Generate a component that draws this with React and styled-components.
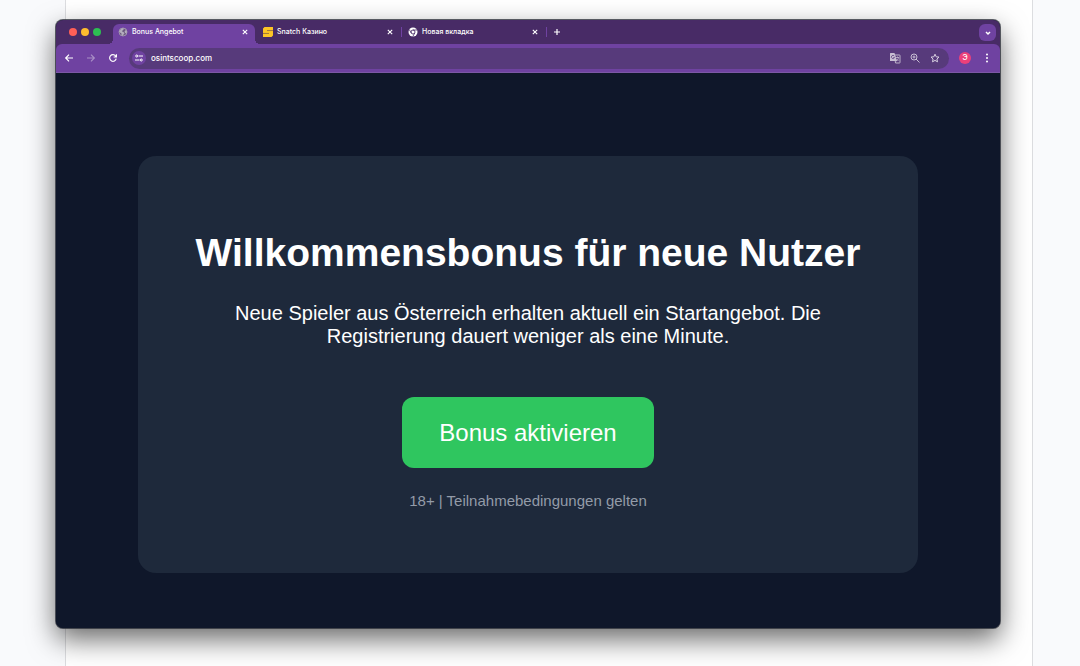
import React from 'react'
import styled, { createGlobalStyle } from 'styled-components'

const GlobalStyle = createGlobalStyle`
  * {
    box-sizing: border-box;
  }
  body {
    margin: 0;
    background: #f9fafc;
    font-family: 'Liberation Sans', Arial, sans-serif;
  }
  button {
    border: 0;
    padding: 0;
    background: none;
    color: inherit;
    font: inherit;
  }
  svg {
    display: block;
    flex: none;
  }
`

const Page = styled('div')`
  display: flex;
  min-height: 100vh;
  padding: 0 47px 0 65px;
`
const Column = styled('main')`
  flex: 1;
  min-width: 0;
  background: #fff;
  border: solid #dcdde0;
  border-width: 0 1px;
`
const Window = styled('section')`
  margin: 20px 32px 38px -10px;
  border-radius: 7px;
  overflow: hidden;
  background: #0f172a;
  box-shadow: 0 0 0 1px rgba(40, 44, 54, 0.75), 0 11px 28px rgba(0, 0, 0, 0.6);
`

const TabStrip = styled('header')`
  display: flex;
  align-items: flex-end;
  height: 24px;
  padding: 0 4px 0 13px;
  background: #482b66;
  color: #fff;
  font: 500 7px/10px Inter, sans-serif;
`
const Lights = styled('div')`
  display: flex;
  align-self: center;
  gap: 4px;
  width: 44px;
`
const Light = styled('span')`
  width: 8px;
  height: 8px;
  border-radius: 50%;
  background: ${props => props.$color};
`
const Tab = styled('div')`
  position: relative;
  display: flex;
  align-items: center;
  flex: 0 1 142px;
  gap: 4px;
  height: 20px;
  padding: 0 5px 4px;
  border-radius: 6px 6px 0 0;
  background: ${props => (props.$active ? '#6f42a1' : 'transparent')};

  &::before,
  &::after {
    content: '';
    display: ${props => (props.$active ? 'block' : 'none')};
    position: absolute;
    bottom: 0;
    width: 5px;
    height: 5px;
  }
  &::before {
    right: 100%;
    background: radial-gradient(circle at 0 0, transparent 5px, #6f42a1 5px);
  }
  &::after {
    left: 100%;
    background: radial-gradient(circle at 100% 0, transparent 5px, #6f42a1 5px);
  }
`
const TabTitle = styled('button')`
  flex: 1;
  min-width: 0;
  overflow: hidden;
  text-align: left;
  white-space: nowrap;
`
const Divider = styled('span')`
  width: 1px;
  height: 10px;
  margin: 0 1px 7px;
  background: ${props => (props.$hidden ? 'transparent' : '#6f42a1')};
`
const IconButton = styled('button')`
  display: flex;
  align-items: center;
  justify-content: center;
  width: ${props => props.$size || 10}px;
  height: ${props => props.$size || 10}px;
  color: ${props => props.$color || '#fff'};
`
const NewTab = styled(IconButton)`
  margin: 0 auto 7px 4px;
`
const TabSearch = styled(IconButton)`
  margin-bottom: 3px;
  border-radius: 6px;
  background: #6f42a1;
`

const ToolbarWrap = styled('div')`
  background: #482b66;
`
const Toolbar = styled('div')`
  display: flex;
  align-items: center;
  height: 29px;
  padding: 0 8px;
  border-radius: 6px 6px 0 0;
  border-bottom: 1px solid #7c58a6;
  background: #6f42a1;
`
const Nav = styled('nav')`
  display: flex;
  gap: 12px;
  margin-right: 11px;
`
const AddressBar = styled('div')`
  display: flex;
  align-items: center;
  flex: 1;
  min-width: 0;
  height: 21px;
  padding: 0 9px 0 3px;
  border-radius: 11px;
  background: #573a7b;
`
const SiteInfo = styled(IconButton)`
  border-radius: 50%;
  background: #6f42a1;
`
const Address = styled('input')`
  flex: 1;
  min-width: 0;
  margin-left: 5px;
  padding: 0;
  border: 0;
  outline: 0;
  background: none;
  color: #fff;
  font: 500 8px/12px Inter, sans-serif;
`
const AddressActions = styled('div')`
  display: flex;
  gap: 10px;
`
const Avatar = styled('button')`
  width: 12px;
  height: 12px;
  margin: 0 11px 0 10px;
  border-radius: 50%;
  background: #ec407a;
  color: #fff;
  font: 500 7px/12px Inter, sans-serif;
  text-align: center;
`

const Site = styled('div')`
  padding: 83px 82px 55px;
  background: #0f172a;
`
const Card = styled('article')`
  display: flex;
  flex-direction: column;
  align-items: center;
  max-width: 780px;
  margin: 0 auto;
  padding: 74px 50px 63px;
  border-radius: 18px;
  background: #1e293b;
  color: #fff;
  text-align: center;
`
const Heading = styled('h1')`
  margin: 0 0 26px;
  font-size: 39px;
  line-height: 46px;
`
const Text = styled('p')`
  max-width: 665px;
  margin: 0 0 49px;
  font-size: 20px;
  line-height: 23px;
`
const BonusButton = styled('button')`
  padding: 22px 37px;
  border-radius: 12px;
  background: #2fc65f;
  color: #fff;
  font-size: 24px;
  line-height: 27px;
`
const Terms = styled('small')`
  margin-top: 24px;
  color: #939ba8;
  font-size: 15px;
  line-height: 18px;
`

const Stroke = ({ size = 10, width = 1.2, children }) => (
  <svg
    width={size}
    height={size}
    viewBox="0 0 10 10"
    fill="none"
    stroke="currentColor"
    strokeWidth={width}
    aria-hidden="true"
  >
    {children}
  </svg>
)

const GlobeIcon = () => (
  <svg width="10" height="10" viewBox="0 0 20 20" aria-hidden="true">
    <circle cx="10" cy="10" r="8" fill="#6b5a7f" stroke="#aaa2b5" strokeWidth="1.6" />
    <path d="M2 9l4-5 4-2 2 2-3 3-1 2 3 1 2 3-2 2-2 3-2-2 0-3-3-2z" fill="#b4adbd" />
    <path d="M14 4l4 5-1 4-3-1-1-3 2-2z" fill="#b4adbd" />
  </svg>
)
const SnatchIcon = () => (
  <svg width="10" height="10" viewBox="0 0 10 10" aria-hidden="true">
    <path d="M1.500 0H10v3.200H4v.8h6v4.500L8.500 10H0V6.800h6V6H0V1.500z" fill="#fdc526" />
    <path d="M4 3.600h6M0 6.400h6" stroke="#b98a30" strokeWidth=".8" />
  </svg>
)
const ChromeIcon = () => (
  <svg width="10" height="10" viewBox="0 0 20 20" aria-hidden="true">
    <circle cx="10" cy="10" r="9" fill="#fff" />
    <circle cx="10" cy="10" r="4" fill="#fff" stroke="#482b66" strokeWidth="1.8" />
    <path d="M10 6h8M6.500 12L2.600 5.200M13.500 12L9.600 19" stroke="#482b66" strokeWidth="1.6" />
  </svg>
)
const CloseIcon = () => (
  <Stroke width={1.1}>
    <path d="M2.800 2.800l4.400 4.400M7.200 2.800l-4.400 4.400" />
  </Stroke>
)
const TranslateIcon = () => (
  <svg width="12" height="12" viewBox="0 0 24 24" fill="none" aria-hidden="true">
    <path d="M11 6h10a1 1 0 0 1 1 1v14a1 1 0 0 1-1 1h-8z" stroke="#c8bfd3" strokeWidth="1.800" />
    <path d="M13 11h7M17 9v2M19 11c-.5 3-2 6-5 7M15 14l4 4" stroke="#c8bfd3" strokeWidth="1.500" />
    <path d="M3 2h8l5 16H3a1 1 0 0 1-1-1V3a1 1 0 0 1 1-1z" fill="#c8bfd3" />
    <path d="M10.500 8a3.200 3.200 0 1 0 .5 3H8.500" stroke="#573a7b" strokeWidth="1.500" />
  </svg>
)

const tabs = [
  { title: 'Bonus Angebot', icon: <GlobeIcon />, active: true },
  { title: 'Snatch Казино', icon: <SnatchIcon /> },
  { title: 'Новая вкладка', icon: <ChromeIcon /> },
]

const Tabs = () => (
  <TabStrip>
    <Lights>
      <Light $color="#ff5f57" />
      <Light $color="#febc2e" />
      <Light $color="#2dbe52" />
    </Lights>
    {tabs.map(({ title, icon, active }) => (
      <React.Fragment key={title}>
        <Tab $active={active}>
          {icon}
          <TabTitle type="button">{title}</TabTitle>
          <IconButton type="button" aria-label={`Close ${title}`}>
            <CloseIcon />
          </IconButton>
        </Tab>
        <Divider $hidden={active} />
      </React.Fragment>
    ))}
    <NewTab type="button" aria-label="New tab">
      <Stroke>
        <path d="M5 2v6M2 5h6" />
      </Stroke>
    </NewTab>
    <TabSearch type="button" $size={17} aria-label="Search tabs">
      <Stroke width={1.5}>
        <path d="M3 4l2 2 2-2" />
      </Stroke>
    </TabSearch>
  </TabStrip>
)

const BrowserBar = () => (
  <ToolbarWrap>
    <Toolbar>
      <Nav>
        <IconButton type="button" aria-label="Back">
          <Stroke>
            <path d="M9 5H2M5 1.700L1.700 5 5 8.300" />
          </Stroke>
        </IconButton>
        <IconButton type="button" $color="#a98fc6" aria-label="Forward">
          <Stroke>
            <path d="M1 5h7M5 1.700L8.300 5 5 8.300" />
          </Stroke>
        </IconButton>
        <IconButton type="button" aria-label="Reload">
          <Stroke>
            <path d="M8.200 5.600A3.300 3.300 0 1 1 7.600 3L8.300 3.800M8.400 1.200V4H5.600" />
          </Stroke>
        </IconButton>
      </Nav>
      <AddressBar>
        <SiteInfo type="button" $size={14} aria-label="Site information">
          <Stroke width={1}>
            <path d="M4.500 3H9M1 7h4.500" />
            <circle cx="2.700" cy="3" r="1" />
            <circle cx="7.300" cy="7" r="1" />
          </Stroke>
        </SiteInfo>
        <Address type="text" aria-label="Address" defaultValue="osintscoop.com" />
        <AddressActions>
          <IconButton type="button" aria-label="Translate">
            <TranslateIcon />
          </IconButton>
          <IconButton type="button" $color="#c8bfd3" aria-label="Zoom">
            <Stroke width={1}>
              <circle cx="4" cy="4" r="3" />
              <path d="M6 6l3.500 3.500M4 2.500v3M2.500 4h3" />
            </Stroke>
          </IconButton>
          <IconButton type="button" $color="#d8d0e1" aria-label="Bookmark">
            <Stroke width={1}>
              <path d="M5 1.200l1.200 2.600 2.800.3-2.100 1.900.6 2.800L5 7.400 2.500 8.800l.6-2.800L1 4.100l2.800-.3z" />
            </Stroke>
          </IconButton>
        </AddressActions>
      </AddressBar>
      <Avatar type="button">Э</Avatar>
      <IconButton type="button" aria-label="Menu">
        <svg width="10" height="10" viewBox="0 0 10 10" fill="currentColor" aria-hidden="true">
          <circle cx="5" cy="1.500" r="1" />
          <circle cx="5" cy="5" r="1" />
          <circle cx="5" cy="8.500" r="1" />
        </svg>
      </IconButton>
    </Toolbar>
  </ToolbarWrap>
)

const App = () => {
  return (
    <>
      <GlobalStyle />
      <Page>
        <Column>
          <Window>
            <Tabs />
            <BrowserBar />
            <Site>
              <Card>
                <Heading>Willkommensbonus für neue Nutzer</Heading>
                <Text>
                  Neue Spieler aus Österreich erhalten aktuell ein Startangebot. Die Registrierung dauert weniger als
                  eine Minute.
                </Text>
                <BonusButton type="button">Bonus aktivieren</BonusButton>
                <Terms>18+ | Teilnahmebedingungen gelten</Terms>
              </Card>
            </Site>
          </Window>
        </Column>
      </Page>
    </>
  )
}

export default App
